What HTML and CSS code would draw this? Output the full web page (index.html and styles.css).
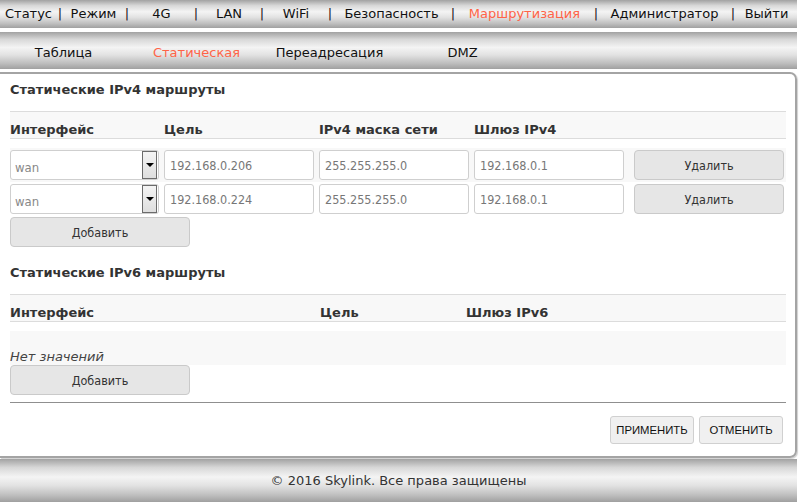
FILE: index.html
```html
<!DOCTYPE html>
<html lang="ru">
<head>
    <meta charset="UTF-8">
    <title>Маршрутизация</title>
    <link rel="stylesheet" href="styles.css">
</head>
<body>
<div class="page">
    <!-- Main menu -->
    <div class="topnav">
        <a class="nav-item">Статус</a><span class="sep">|</span>
        <a class="nav-item">Режим</a><span class="sep">|</span>
        <a class="nav-item">4G</a><span class="sep">|</span>
        <a class="nav-item">LAN</a><span class="sep">|</span>
        <a class="nav-item">WiFi</a><span class="sep">|</span>
        <a class="nav-item">Безопасность</a><span class="sep">|</span>
        <a class="nav-item active">Маршрутизация</a><span class="sep">|</span>
        <a class="nav-item">Администратор</a><span class="sep">|</span>
        <a class="nav-item">Выйти</a>
    </div>

    <!-- Sub menu -->
    <div class="subnav">
        <div class="subnav-list">
            <a class="sub-item">Таблица</a>
            <a class="sub-item active">Статическая</a>
            <a class="sub-item">Переадресация</a>
            <a class="sub-item">DMZ</a>
        </div>
    </div>

    <div class="content">
        <div class="section-title">Статические IPv4 маршруты</div>

        <div class="grid4 head">
            <div>Интерфейс</div>
            <div>Цель</div>
            <div>IPv4 маска сети</div>
            <div>Шлюз IPv4</div>
            <div></div>
        </div>

        <div class="grid4 row odd">
            <div class="select">
                <select class="select-input"><option>wan</option></select>
                <span class="select-arrow"></span>
            </div>
            <input class="field" type="text" value="192.168.0.206">
            <input class="field" type="text" value="255.255.255.0">
            <input class="field" type="text" value="192.168.0.1">
            <button class="btn btn-wide">Удалить</button>
        </div>
        <div class="grid4 row">
            <div class="select">
                <select class="select-input"><option>wan</option></select>
                <span class="select-arrow"></span>
            </div>
            <input class="field" type="text" value="192.168.0.224">
            <input class="field" type="text" value="255.255.255.0">
            <input class="field" type="text" value="192.168.0.1">
            <button class="btn btn-wide">Удалить</button>
        </div>
        <button class="btn btn-add">Добавить</button>

        <div class="section-title second">Статические IPv6 маршруты</div>

        <div class="grid6 head">
            <div>Интерфейс</div>
            <div>Цель</div>
            <div>Шлюз IPv6</div>
        </div>
        <div class="empty-row">Нет значений</div>
        <button class="btn btn-add flush">Добавить</button>

        <div class="actions">
            <button class="btn btn-action">ПРИМЕНИТЬ</button>
            <button class="btn btn-action">ОТМЕНИТЬ</button>
        </div>
    </div>

    <div class="footer">© 2016 Skylink. Все права защищены</div>
</div>
</body>
</html>
```

FILE: styles.css
```css
body {
    margin: 0;
    background: #fff;
    font-family: "DejaVu Sans", Verdana, sans-serif;
    font-size: 13px;
    color: #222;
}

.page {
    width: 797px;
}

/* Metallic bars */
.topnav,
.subnav,
.footer {
    background: linear-gradient(to bottom, #a2a2a2 0%, #d8d8d8 20%, #f4f4f4 42%, #e2e2e2 62%, #bdbdbd 85%, #a0a0a0 100%);
}

.topnav {
    height: 28px;
    display: grid;
    grid-template-columns: 57px 6px 61px 6px 63px 6px 60px 6px 62px 6px 117px 6px 137px 6px 131px 6px 61px;
    align-items: center;
    line-height: 28px;
}

.nav-item {
    text-align: center;
    color: #111;
    white-space: nowrap;
}

.nav-item.active {
    color: #ff6347;
}

.sep {
    text-align: center;
    color: #1e0a22;
}

.subnav {
    height: 37px;
    margin-top: 4px;
}

.subnav-list {
    display: grid;
    grid-template-columns: repeat(4, 133px);
    margin-left: -3px;
    line-height: 41px;
}

.sub-item {
    text-align: center;
    color: #111;
}

.sub-item.active {
    color: #ff6347;
}

/* Main panel */
.content {
    margin-top: 3px;
    border: 2px solid #a4a4a4;
    border-left: none;
    border-radius: 0 7px 7px 0;
    padding: 0 9px 12px 10px;
    box-shadow: 1px 1px 1px #d0d0d0;
}

.section-title {
    font-weight: bold;
    color: #333;
    line-height: 18px;
    padding: 7px 0 12px;
}

.section-title.second {
    padding-top: 17px;
}

.head {
    border-top: 1px solid #dcdcdc;
    border-bottom: 1px solid #dcdcdc;
    background: #f8f8f8;
    padding-top: 10px;
    height: 16px;
    line-height: 16px;
    font-weight: bold;
    color: #333;
}

.grid4 {
    display: grid;
    grid-template-columns: 154px 155px 155px 160px 150px;
}

.grid6 {
    display: grid;
    grid-template-columns: 310px 146px 1fr;
}

.row {
    height: 34px;
    align-items: start;
}

.head + .row {
    margin-top: 9px;
}

.row.odd {
    background: #f8f8f8;
}

.row > * {
    margin-top: 2px;
}

.field {
    box-sizing: border-box;
    width: 150px;
    height: 30px;
    margin: 2px 0 0;
    padding: 1px 0 0 5px;
    border: 1px solid #cfcfcf;
    border-radius: 3px;
    background: #fff;
    font-family: "DejaVu Sans Condensed", "DejaVu Sans", sans-serif;
    font-size: 12.5px;
    color: #777;
}

.select {
    position: relative;
    width: 149px;
    height: 30px;
}

.select-input {
    box-sizing: border-box;
    width: 100%;
    height: 30px;
    border: 1px solid #cfcfcf;
    border-radius: 3px;
    background: #fff;
    -webkit-appearance: none;
    appearance: none;
    padding: 4px 0 0 4px;
    font-family: "DejaVu Sans Condensed", "DejaVu Sans", sans-serif;
    font-size: 13px;
    color: #888;
}

.select-arrow {
    position: absolute;
    top: 1px;
    right: 2px;
    width: 13px;
    height: 26px;
    border: 1px solid #6b6b6b;
    background: linear-gradient(to bottom, #f4f4f4, #dedede);
}

.select-arrow::after {
    content: "";
    position: absolute;
    left: 3px;
    top: 11px;
    border-left: 4px solid transparent;
    border-right: 4px solid transparent;
    border-top: 4px solid #000;
}

/* Buttons */
.btn {
    box-sizing: border-box;
    height: 30px;
    border: 1px solid #cacaca;
    border-radius: 4px;
    background: #e6e6e6;
    color: #333;
    font-family: "DejaVu Sans Condensed", "DejaVu Sans", sans-serif;
    font-size: 12.5px;
    cursor: pointer;
}

.btn-wide {
    width: 150px;
}

.btn-add {
    display: block;
    width: 180px;
    margin-top: 1px;
}

.btn-add.flush {
    margin-top: 0;
}

.empty-row {
    margin-top: 9px;
    height: 34px;
    box-sizing: border-box;
    padding-top: 18px;
    line-height: 16px;
    background: #f8f8f8;
    font-style: italic;
    color: #444;
}

.actions {
    margin-top: 7px;
    border-top: 1px solid #8f8f8f;
    padding: 13px 3px 0 0;
    display: flex;
    justify-content: flex-end;
    gap: 5px;
}

.btn-action {
    width: 84px;
    height: 28px;
    padding: 0;
    background: #f0f0f0;
    border-color: #d0d0d0;
    border-radius: 3px;
    font-family: "Liberation Sans", Arial, sans-serif;
    font-size: 11.3px;
    color: #111;
}

.footer {
    margin-top: 1px;
    height: 43px;
    line-height: 43px;
    text-align: center;
    color: #333;
}
```
